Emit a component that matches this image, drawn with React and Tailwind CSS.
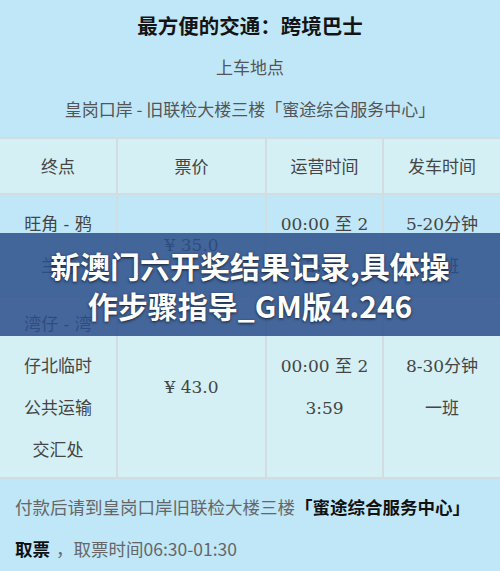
import React from "react";

const rows = [
  {
    bg: "bg-[#bfe7f8]",
    pad: "py-[8px]",
    cells: [
      ["旺角 - 鸦", "兰街"],
      ["¥ 35.0"],
      ["00:00 至 2", "3:59"],
      ["5-20分钟", "一班"],
    ],
  },
  {
    bg: "bg-[#d4f0f4]",
    pad: "py-[6px]",
    cells: [
      ["湾仔 - 湾", "仔北临时", "公共运输", "交汇处"],
      ["¥ 43.0"],
      ["00:00 至 2", "3:59"],
      ["8-30分钟", "一班"],
    ],
  },
];

const Cell = ({ lines, first, pad }) => (
  <div
    className={`flex flex-col items-center justify-center text-center ${pad} ${
      first ? "" : "border-l-2 border-[#d2dde1]"
    }`}
  >
    {lines.map((l, i) => (
      <div key={i} className="whitespace-nowrap">
        {l}
      </div>
    ))}
  </div>
);

const App = () => {
  return (
    <div className="relative w-[500px] h-[571px] overflow-hidden bg-[#bfe7f8] font-['Noto_Sans_CJK_SC',sans-serif] leading-[42px]">
      {/* top info */}
      <div className="pt-1 pb-[7px] text-center">
        <div className="text-[20.5px] font-bold text-[#141414]">
          最方便的交通：跨境巴士
        </div>
        <div className="text-[17px] text-[#555]">上车地点</div>
        <div className="text-[17px] text-[#555]">
          皇岗口岸 - 旧联检大楼三楼「蜜途综合服务中心」
        </div>
      </div>

      {/* table */}
      <div className="text-[17px] text-[#454545]">
        <div className="grid grid-cols-[116px_149px_117px_1fr] bg-[#d4f0f4] border-y-2 border-[#d2dde1]">
          {["终点", "票价", "运营时间", "发车时间"].map((h, i) => (
            <Cell key={h} lines={[h]} first={i === 0} pad="py-[6px]" />
          ))}
        </div>
        {rows.map((r, ri) => (
          <div
            key={ri}
            className={`grid grid-cols-[116px_149px_117px_1fr] border-b-2 border-[#d2dde1] ${r.bg} font-['DejaVu_Serif','Noto_Sans_CJK_SC',serif]`}
          >
            {r.cells.map((c, ci) => (
              <Cell key={ci} lines={c} first={ci === 0} pad={r.pad} />
            ))}
          </div>
        ))}
      </div>

      {/* footer */}
      <div className="pt-[7px] pl-[15px] text-[17.5px] text-[#666]">
        <div>
          付款后请到皇岗口岸旧联检大楼三楼
          <span className="font-bold text-[#111]">「蜜途综合服务中心」</span>
        </div>
        <div>
          <span className="font-bold text-[#111] mr-[6px]">取票</span>，取票时间06:30-01:30
        </div>
      </div>

      {/* title overlay */}
      <div className="absolute left-0 right-0 top-[233px] h-[103px] flex flex-col items-center justify-center bg-[#2b4e89]/85 text-white font-bold text-[30px] leading-[40px] [text-shadow:0_1px_3px_rgba(0,0,0,0.7)]">
        <div>新澳门六开奖结果记录,具体操</div>
        <div>作步骤指导_GM版4.246</div>
      </div>
    </div>
  );
};

export default App;
